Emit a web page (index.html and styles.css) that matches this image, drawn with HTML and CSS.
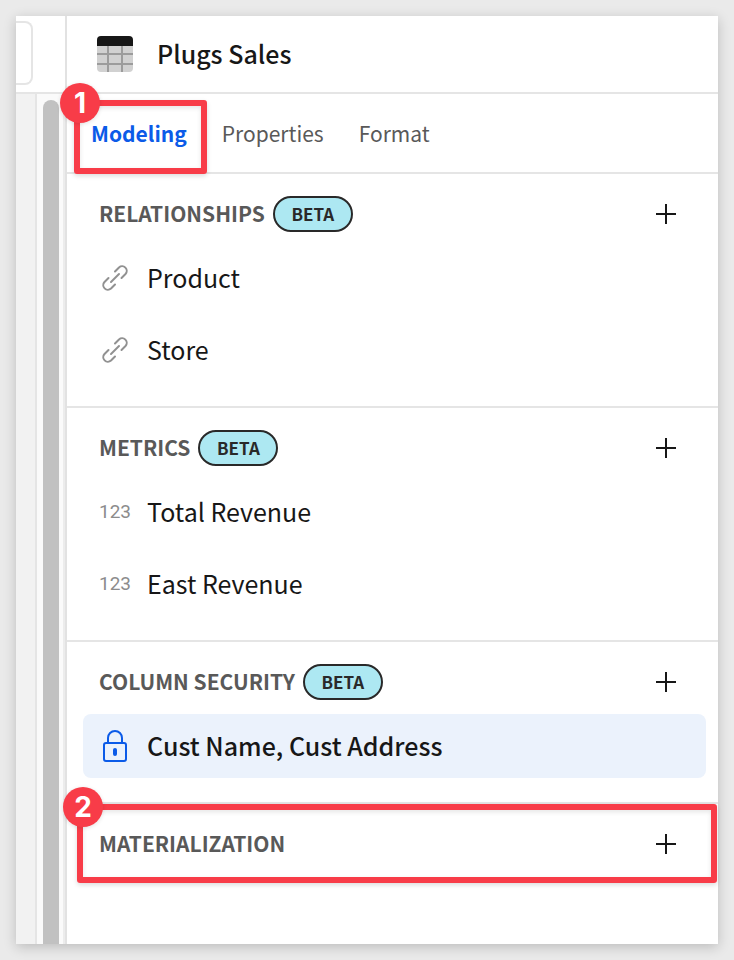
FILE: index.html
```html
<!DOCTYPE html>
<html lang="en">
<head>
<meta charset="utf-8">
<meta name="viewport" content="width=device-width, initial-scale=1">
<title>Plugs Sales</title>
<link rel="stylesheet" href="styles.css">
</head>
<body>
<svg class="defs" aria-hidden="true">
  <symbol id="plus" viewBox="0 0 20 20"><path d="M10 0V20M0 10H20" fill="none" stroke="#171717" stroke-width="2"/></symbol>
  <symbol id="link" viewBox="0 0 28 28"><g fill="none" stroke="#919191" stroke-width="2" stroke-linecap="round" stroke-linejoin="round"><path d="M10 18L18 10"/><path d="M14 7.500L18 3.500A4.600 4.600 0 0 1 24.500 10L20.500 14"/><path d="M7.500 14L3.500 18A4.600 4.600 0 0 0 10 24.500L14 20.500"/></g></symbol>
</svg>
<div class="window">
  <div class="canvas">
    <div class="canvas-top"><div class="field-edge"></div></div>
    <div class="canvas-body">
      <div class="page-edge"></div>
      <div class="track"><div class="thumb"></div></div>
    </div>
  </div>
  <aside class="panel">
    <header class="panel-header">
      <svg class="table-icon" viewBox="0 0 36 36" aria-hidden="true">
        <path d="M0 10H36V32A4 4 0 0 1 32 36H4A4 4 0 0 1 0 32Z" fill="#d1d1d1"/>
        <path d="M0 18H36M0 28H36M11 10V36M25 10V36" stroke="#9c9c9c" stroke-width="2"/>
        <path d="M0 10V4A4 4 0 0 1 4 0H32A4 4 0 0 1 36 4V10Z" fill="#171717"/>
      </svg>
      <h1>Plugs Sales</h1>
    </header>
    <nav class="tabs">
      <div class="tab-slot">
        <a class="tab active" href="#modeling">Modeling</a>
        <div class="callout callout-tab"><span class="step">1</span></div>
      </div>
      <a class="tab" href="#properties">Properties</a>
      <a class="tab" href="#format">Format</a>
    </nav>
    <section class="section">
      <div class="section-header"><h2>RELATIONSHIPS</h2><span class="beta">BETA</span>
        <button class="add" type="button" aria-label="Add relationship"><svg><use href="#plus"/></svg></button></div>
      <ul>
        <li class="row"><svg class="row-icon"><use href="#link"/></svg><span class="name">Product</span></li>
        <li class="row"><svg class="row-icon"><use href="#link"/></svg><span class="name">Store</span></li>
      </ul>
    </section>
    <section class="section">
      <div class="section-header"><h2>METRICS</h2><span class="beta">BETA</span>
        <button class="add" type="button" aria-label="Add metric"><svg><use href="#plus"/></svg></button></div>
      <ul>
        <li class="row"><span class="number-icon">123</span><span class="name">Total Revenue</span></li>
        <li class="row"><span class="number-icon">123</span><span class="name">East Revenue</span></li>
      </ul>
    </section>
    <section class="section">
      <div class="section-header"><h2>COLUMN SECURITY</h2><span class="beta">BETA</span>
        <button class="add" type="button" aria-label="Add column security"><svg><use href="#plus"/></svg></button></div>
      <ul>
        <li class="row selected">
          <svg class="lock-icon" viewBox="0 0 28 36" aria-hidden="true"><g fill="none" stroke="#0b5be8" stroke-width="2"><rect x="3" y="15" width="22" height="18" rx="2"/><path d="M7 15V10A7 7 0 0 1 21 10V15"/></g><rect x="12" y="20" width="4" height="8" rx="2" fill="#0b5be8"/></svg><span class="name">Cust Name, Cust Address</span></li>
      </ul>
    </section>
    <section class="section last">
      <div class="section-header"><h2>MATERIALIZATION</h2>
        <button class="add" type="button" aria-label="Add materialization"><svg><use href="#plus"/></svg></button></div>
      <div class="callout callout-section"><span class="step">2</span></div>
    </section>
  </aside>
</div>
</body>
</html>
```

FILE: styles.css
```css
* { box-sizing: border-box; }

body {
  margin: 0;
  padding: 16px;
  min-height: 100vh;
  display: flex;
  background: #eaeaea;
  color: #171717;
  font-family: "Noto Sans CJK SC", "Noto Sans", sans-serif;
  font-size: 25px;
  line-height: 32px;
}

h1, h2, ul { margin: 0; padding: 0; }
ul { list-style: none; display: grid; gap: 8px; }
.defs { position: absolute; width: 0; height: 0; }

.window {
  flex: 1;
  display: flex;
  background: #fff;
  box-shadow: 0 3px 12px rgba(0, 0, 0, 0.2);
}

.canvas {
  width: 51px;
  display: flex;
  flex-direction: column;
  border-right: 2px solid #e2e2e2;
}
.canvas-top {
  height: 78px;
  padding: 5px 0 7px;
  display: flex;
  border-bottom: 2px solid #e5e5e5;
}
.field-edge {
  width: 17px;
  border: 2px solid #e5e5e5;
  border-left: 0;
  border-radius: 0 8px 8px 0;
}
.canvas-body { flex: 1; display: flex; }
.page-edge {
  width: 21px;
  background: #f2f2f2;
  border-right: 2px solid #e5e5e5;
}
.track {
  flex: 1;
  display: flex;
  padding: 6px 4px 0 6px;
  background: #fafafa;
  border-right: 2px solid #ececec;
}
.thumb { flex: 1; background: #c1c1c1; border-radius: 8px 8px 0 0; }

.panel { flex: 1; min-width: 0; }
.panel-header {
  height: 78px;
  padding: 0 30px;
  display: flex;
  align-items: center;
  gap: 24px;
  border-bottom: 2px solid #e5e5e5;
}
.table-icon { width: 36px; height: 36px; }
h1 { padding-bottom: 2px; font-size: 25px; font-weight: 500; }

.tabs {
  height: 80px;
  padding: 0 24px;
  display: flex;
  gap: 35px;
  border-bottom: 2px solid #e5e5e5;
  font-size: 21px;
}
.tab-slot { position: relative; display: flex; }
.tab {
  display: flex;
  align-items: center;
  color: #595959;
  text-decoration: none;
}
.tab.active { color: #0b5be8; font-weight: 700; }

.section {
  padding: 8px 12px 24px 16px;
  border-bottom: 2px solid #e5e5e5;
}
.section-header {
  height: 64px;
  padding: 0 24px 0 16px;
  display: flex;
  align-items: center;
  gap: 8px;
}
h2 {
  padding-bottom: 2px;
  color: #595959;
  font-size: 21px;
  font-weight: 700;
}
.beta {
  width: 80px;
  height: 36px;
  display: flex;
  align-items: center;
  justify-content: center;
  border: 2px solid #292929;
  border-radius: 18px;
  background: #ade8f2;
  color: #292929;
  font-size: 17px;
  font-weight: 700;
}
.add {
  margin-left: auto;
  padding: 6px;
  display: flex;
  border: 0;
  background: none;
}
.add svg { width: 20px; height: 20px; }

.row {
  height: 64px;
  padding: 0 16px;
  display: flex;
  align-items: center;
  gap: 16px;
  border-radius: 8px;
}
.name { padding-bottom: 2px; }
.row-icon { width: 28px; height: 28px; margin: 0 2px; }
.number-icon {
  width: 32px;
  color: #8c8c8c;
  font-family: Roboto, sans-serif;
  font-size: 19px;
  text-align: center;
}
.lock-icon { width: 28px; height: 36px; margin: 0 2px; }
.selected { background: #ebf2fc; font-weight: 500; }

.last { position: relative; border: 0; padding-bottom: 8px; }

.callout {
  position: absolute;
  border: 6px solid #f83c48;
  border-radius: 3px;
  box-shadow: 0 2px 5px rgba(0, 0, 0, 0.14), inset 0 2px 5px rgba(0, 0, 0, 0.1);
  pointer-events: none;
}
.callout-tab { inset: 6px -20px -2px -17px; }
.callout-section { inset: 0 1px 1px 10px; }
.step {
  position: absolute;
  top: -23px;
  left: -20px;
  width: 40px;
  height: 40px;
  border-radius: 50%;
  background: #f83c48;
  box-shadow: 0 1px 4px rgba(0, 0, 0, 0.12);
  color: #fff;
  font: 700 28px/40px Inter, sans-serif;
  text-align: center;
}
```
